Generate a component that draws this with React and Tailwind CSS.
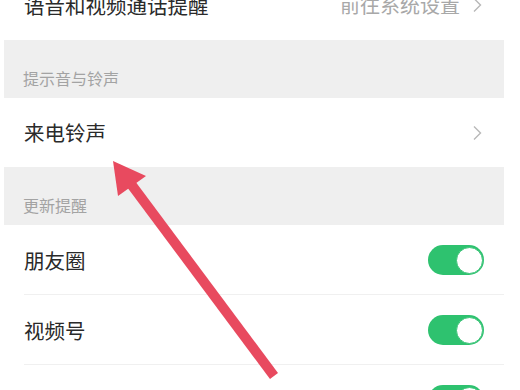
const font = { fontFamily: '"Noto Sans CJK SC", "Noto Sans", sans-serif' };

function Chevron() {
  return (
    <svg width="10" height="16" viewBox="0 0 10 16" fill="none">
      <path d="M2 1.5 L8.5 8 L2 14.5" stroke="#b8b8b8" strokeWidth="1.4" />
    </svg>
  );
}

function Toggle() {
  return (
    <div className="w-[56px] h-[30px] rounded-full bg-[#2ec26f] flex items-center justify-end pr-[1.5px]">
      <div className="w-[27px] h-[27px] rounded-full bg-white border border-[#3dc47a]" />
    </div>
  );
}

function Header({ title }) {
  return (
    <div className="h-[58px] bg-[#efefef] flex items-end pb-[8px] pl-[19px] text-[16px] text-[#a3a3a3]">
      {title}
    </div>
  );
}

function ToggleRow({ title, last }) {
  return (
    <div className="h-[70px] flex items-center justify-between pl-[20px] pr-[20px] relative">
      <span className="text-[20.5px] text-[#2a2a2a]">{title}</span>
      <Toggle />
      {!last && <div className="absolute left-[20px] right-0 bottom-0 h-px bg-[#f0f0f0]" />}
    </div>
  );
}

export default function App() {
  return (
    <div className="relative w-[520px] h-[390px] overflow-hidden bg-white" style={font}>
      <div className="pl-[4px] w-[504px]">
        {/* top row, cut off */}
        <div className="h-[70px] -mt-[30px] flex items-center justify-between pl-[20px] pr-[22px]">
          <span className="text-[20.5px] text-[#2a2a2a]">语音和视频通话提醒</span>
          <div className="flex items-center gap-[12px] text-[20px] text-[#a8a8a8]">
            <span>前往系统设置</span>
            <Chevron />
          </div>
        </div>

        <Header title="提示音与铃声" />

        <div className="h-[69px] flex items-center justify-between pl-[20px] pr-[22px]">
          <span className="text-[20.5px] text-[#2a2a2a]">来电铃声</span>
          <Chevron />
        </div>

        <Header title="更新提醒" />

        <ToggleRow title="朋友圈" />
        <ToggleRow title="视频号" />
        <ToggleRow title="直播和附近" last />
      </div>

      {/* red annotation arrow */}
      <svg className="absolute left-0 top-0" width="520" height="390" viewBox="0 0 520 390">
        <line x1="274" y1="376" x2="128" y2="180" stroke="#e84a5f" strokeWidth="10" strokeLinecap="butt" />
        <polygon points="113,161 146,176 118,196" fill="#e84a5f" />
      </svg>
    </div>
  );
}
